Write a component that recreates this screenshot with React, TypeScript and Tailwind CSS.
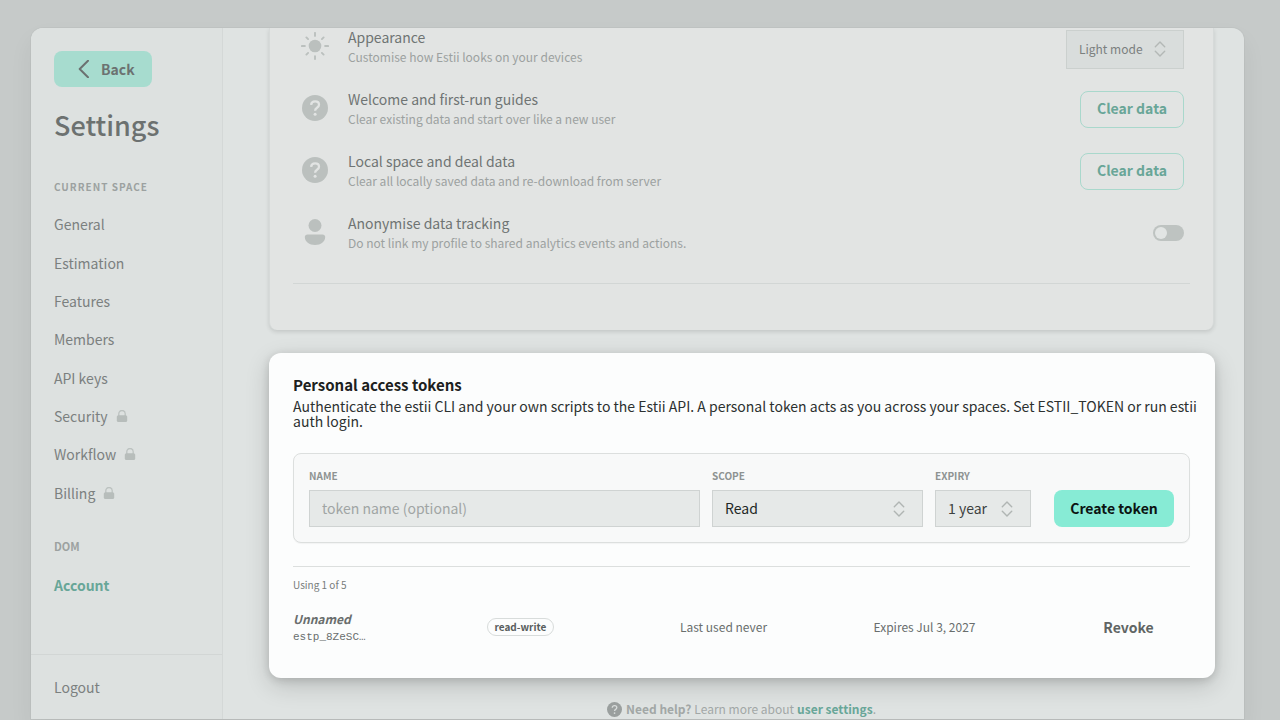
import type { ReactNode } from "react";

const spaceLinks = [
  { label: "General" },
  { label: "Estimation" },
  { label: "Features" },
  { label: "Members" },
  { label: "API keys" },
  { label: "Security", locked: true },
  { label: "Workflow", locked: true },
  { label: "Billing", locked: true },
];

const LockIcon = () => (
  <svg className="w-3 h-3" viewBox="0 0 12 12" fill="none" aria-hidden="true">
    <path d="M2.8 6V3.7a3.2 3.2 0 0 1 6.4 0V6" stroke="#bcc2c0" strokeWidth="1.3" />
    <rect x=".8" y="5.2" width="10.4" height="6.8" rx="1.6" fill="#b7bdbb" />
  </svg>
);

const SunIcon = () => (
  <svg className="w-7 h-7" viewBox="0 0 28 28" aria-hidden="true">
    <circle cx="14" cy="14" r="6.3" fill="#bbc0be" />
    <g stroke="#bbc0be" strokeWidth="1.9" strokeLinecap="round">
      <path d="M14 .9v3M14 24.1v3M.9 14h3M24.1 14h3M5.4 5.4l1.7 1.7M20.9 20.9l1.7 1.7M5.4 22.6l1.7-1.7M20.9 7.1l1.7-1.7" />
    </g>
  </svg>
);

const HelpIcon = ({ className, mark = "#e2e4e3" }: { className: string; mark?: string }) => (
  <svg className={className} viewBox="0 0 26 26" fill="none" aria-hidden="true">
    <circle cx="13" cy="13" r="13" fill="currentColor" />
    <path
      d="M9.1 9.9c.2-2.2 1.8-3.5 4-3.5 2.3 0 3.9 1.3 3.9 3.3 0 1.5-.8 2.3-2 3.1-1.3.9-1.9 1.5-1.9 3"
      stroke={mark}
      strokeWidth="2.3"
    />
    <circle cx="13.1" cy="19.2" r="1.5" fill={mark} />
  </svg>
);

const PersonIcon = () => (
  <svg className="w-[26px] h-[26px]" viewBox="0 0 26 26" fill="#bbc0be" aria-hidden="true">
    <circle cx="13" cy="6.5" r="6.5" />
    <path d="M5.5 15.5h15c1.6 0 2.7 1 2.7 2.5 0 4.5-4.5 8-10.2 8S2.8 22.5 2.8 18c0-1.5 1.1-2.5 2.7-2.5z" />
  </svg>
);

const UpDownIcon = ({ className }: { className: string }) => (
  <svg
    className={`pointer-events-none absolute top-1/2 -translate-y-1/2 w-3 h-4 ${className}`}
    viewBox="0 0 12 16"
    fill="none"
    stroke="currentColor"
    strokeWidth="1.4"
    strokeLinecap="round"
    strokeLinejoin="round"
    aria-hidden="true"
  >
    <path d="M1.3 5.8 6 1.1l4.7 4.7M1.3 10.2 6 14.9l4.7-4.7" />
  </svg>
);

const SettingRow = ({
  icon,
  title,
  text,
  children,
}: {
  icon: ReactNode;
  title: string;
  text: string;
  children: ReactNode;
}) => (
  <div className="flex items-start h-[42px]">
    <div className="flex items-center justify-center w-7 h-9 mr-[19px] text-[#bbc0be]">{icon}</div>
    <div className="flex-1">
      <h3 className="text-sm leading-[18px] text-[#6f7473]">{title}</h3>
      <p className="text-xs leading-[22px] text-[#9ca1a0]">{text}</p>
    </div>
    <div className="flex items-center h-[38px]">{children}</div>
  </div>
);

const ClearButton = () => (
  <button
    type="button"
    className="h-[37px] w-[104px] rounded-lg border border-[#a9d8cc] pb-0.5 text-sm font-bold text-[#69a698]"
  >
    Clear data
  </button>
);

const Sidebar = () => (
  <aside className="flex flex-col w-48 shrink-0 bg-[#dde1e0] border-r border-[#d4d8d7]">
    <div className="px-[23px] pt-[23px]">
      <button
        type="button"
        className="flex items-center gap-3 h-9 pl-6 pr-[17px] rounded-lg bg-[#a7dccf] text-sm font-bold text-[#6c7271]"
      >
        <svg className="w-[11px] h-[18px]" viewBox="0 0 11 18" fill="none" stroke="currentColor" strokeWidth="2" aria-hidden="true">
          <path d="M10 .8 1.7 9l8.3 8.2" strokeLinecap="round" strokeLinejoin="round" />
        </svg>
        Back
      </button>
      <h1 className="mt-5 text-[27px] leading-9 font-medium text-[#6c7170]">Settings</h1>
      <h2 className="mt-9 text-[10px] leading-4 font-bold tracking-[1px] text-[#9ca1a0]">CURRENT SPACE</h2>
      <nav className="flex flex-col h-[307px] mt-2.5">
        {spaceLinks.map((link) => (
          <a key={link.label} href="#" className="flex flex-1 items-center gap-2 text-sm text-[#7b807f]">
            {link.label}
            {link.locked && <LockIcon />}
          </a>
        ))}
      </nav>
      <h2 className="mt-[26px] text-[11px] leading-4 font-bold text-[#9ca1a0]">DOM</h2>
      <a href="#" className="flex items-center h-[38px] mt-3 text-sm font-bold text-[#68a698]">
        Account
      </a>
    </div>
    <div className="flex items-center h-[65px] mt-auto px-[23px] border-t border-[#d2d6d5]">
      <a href="#" className="text-sm text-[#7b807f]">Logout</a>
    </div>
  </aside>
);

const PreferencesCard = () => (
  <section className="px-[23px] pb-[46px] rounded-b-lg bg-[#e2e4e3] border-x border-[#d6dad9] shadow-[0_2px_4px_rgba(0,0,0,0.12)]">
    <div className="flex flex-col gap-5 pl-2 pr-1.5 pb-[27px] border-b border-[#d2d6d5]">
      <SettingRow icon={<SunIcon />} title="Appearance" text="Customise how Estii looks on your devices">
        <div className="relative mt-1 text-[#b3b8b6]">
          <select
            aria-label="Appearance"
            className="appearance-none w-[118px] h-[39px] pl-3 bg-[#d9dddc] border border-[#cbd0ce] text-xs text-[#7b807f]"
          >
            <option>Light mode</option>
          </select>
          <UpDownIcon className="right-[18px]" />
        </div>
      </SettingRow>
      <SettingRow
        icon={<HelpIcon className="w-[26px] h-[26px]" />}
        title="Welcome and first-run guides"
        text="Clear existing data and start over like a new user"
      >
        <ClearButton />
      </SettingRow>
      <SettingRow
        icon={<HelpIcon className="w-[26px] h-[26px]" />}
        title="Local space and deal data"
        text="Clear all locally saved data and re-download from server"
      >
        <ClearButton />
      </SettingRow>
      <SettingRow
        icon={<PersonIcon />}
        title="Anonymise data tracking"
        text="Do not link my profile to shared analytics events and actions."
      >
        <label className="flex items-center w-[31px] h-4 px-0.5 rounded-full bg-[#bec3c1] has-checked:justify-end">
          <input type="checkbox" aria-label="Anonymise data tracking" className="sr-only" />
          <span className="w-3 h-3 rounded-full bg-[#e2e5e4]" />
        </label>
      </SettingRow>
    </div>
  </section>
);

const fieldLabel = "block text-[10px] leading-4 font-bold text-[#8e9392]";
const field = "block w-full h-[37px] mt-1.5 pl-3 pb-0.5 bg-[#e6e9e8] border border-[#cfd3d2] text-sm";

const TokenForm = () => (
  <form
    onSubmit={(e) => e.preventDefault()}
    className="flex items-end gap-3 mt-6 px-[15px] pt-3.5 pb-[15px] rounded-lg bg-[#f8f9f9] border border-[#dcdfde] shadow-[0_1px_1px_rgba(0,0,0,0.04)]"
  >
    <div className="flex-1">
      <label htmlFor="token-name" className={fieldLabel}>NAME</label>
      <input
        id="token-name"
        placeholder="token name (optional)"
        className={`${field} text-[#222726] placeholder:text-[#a0a5a4]`}
      />
    </div>
    <div className="w-[211px]">
      <label htmlFor="token-scope" className={fieldLabel}>SCOPE</label>
      <div className="relative text-[#b0b5b3]">
        <select id="token-scope" className={`${field} appearance-none text-[#222726]`}>
          <option>Read</option>
          <option>Read-write</option>
        </select>
        <UpDownIcon className="right-[18px]" />
      </div>
    </div>
    <div className="w-24">
      <label htmlFor="token-expiry" className={fieldLabel}>EXPIRY</label>
      <div className="relative text-[#b0b5b3]">
        <select id="token-expiry" className={`${field} appearance-none text-[#3c4140]`}>
          <option>1 year</option>
        </select>
        <UpDownIcon className="right-[18px]" />
      </div>
    </div>
    <button type="submit" className="w-[120px] h-[37px] ml-[11px] rounded-lg bg-[#87ebd5] pb-0.5 text-sm font-bold text-[#0c1412]">
      Create token
    </button>
  </form>
);

const TokensCard = () => (
  <section className="-mr-px mt-[23px] pl-6 pr-[25px] pt-[22px] pb-8 rounded-xl bg-[#fcfdfd] shadow-[0_8px_24px_rgba(0,0,0,0.16),0_2px_8px_rgba(0,0,0,0.14)]">
    <h2 className="text-[15px] leading-5 font-bold text-[#1c2120]">Personal access tokens</h2>
    <p className="-mr-5 mt-1 text-sm leading-[15px] text-[#2c3130]">
      Authenticate the estii CLI and your own scripts to the Estii API. A personal token acts as you across your
      spaces. Set ESTII_TOKEN or run estii auth login.
    </p>
    <TokenForm />
    <p className="mt-[23px] pt-2.5 border-t border-[#dcdfde] text-[10px] leading-4 text-[#777c7b]">Using 1 of 5</p>
    <table className="w-full mt-[15px] table-fixed text-left text-xs text-[#696e6d]">
      <tbody>
        <tr>
          <td className="pt-0.5">
            <div className="leading-[18px] font-bold italic">Unnamed</div>
            <div className="text-[11px] leading-[18px] [font-family:'Liberation_Mono',monospace]">
              estp_8ZeSC…
            </div>
          </td>
          <td>
            <span className="inline-flex items-center h-[18px] px-[7px] rounded-full border border-[#d8dcdb] text-[10px] font-bold text-[#595e5d]">
              read-write
            </span>
          </td>
          <td>Last used never</td>
          <td>Expires Jul 3, 2027</td>
          <td className="w-[123px] text-center">
            <button type="button" className="px-2 text-sm leading-5 font-bold text-[#606564]">Revoke</button>
          </td>
        </tr>
      </tbody>
    </table>
  </section>
);

const App = () => {
  return (
    <div className="h-screen overflow-hidden pt-7 pl-[31px] pr-9 pb-px bg-[#c6cac9] [font-family:'Noto_Sans_CJK_SC',sans-serif]">
      <div className="h-full rounded-t-xl shadow-[0_12px_24px_rgba(0,0,0,0.06),0_0_1px_1px_rgba(0,0,0,0.03)]">
        <div className="flex h-full overflow-hidden rounded-t-xl bg-[#dfe3e2]">
          <Sidebar />
          <main className="flex-1 pl-[46px] pr-[30px]">
            <PreferencesCard />
            <TokensCard />
            <p className="flex items-center justify-center mt-[21px] text-xs leading-5 text-[#a2a7a6]">
              <HelpIcon className="w-[15px] h-[15px] mr-1 text-[#9a9f9e]" mark="#d8dcdb" />
              <b className="mr-[3px]">Need help?</b> Learn more about
              <a href="#" className="ml-[3px] font-bold text-[#68a698]">user settings</a>.
            </p>
          </main>
        </div>
      </div>
    </div>
  );
};

export default App;
